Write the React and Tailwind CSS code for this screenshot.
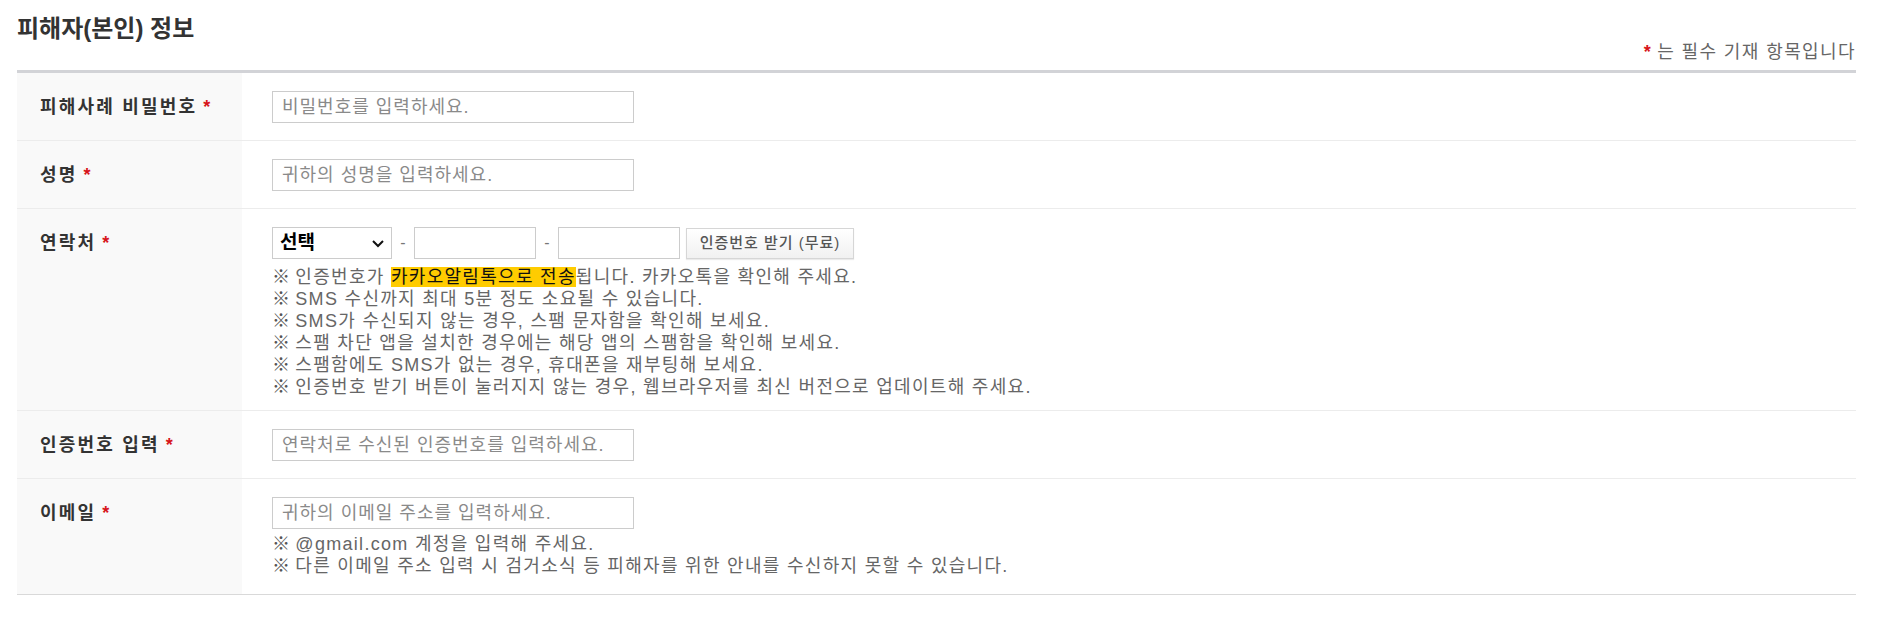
const fieldRows = [
  { label: '피해사례 비밀번호', placeholder: '비밀번호를 입력하세요.' },
  { label: '성명', placeholder: '귀하의 성명을 입력하세요.' },
];

const phoneHints = [
  'SMS 수신까지 최대 5분 정도 소요될 수 있습니다.',
  'SMS가 수신되지 않는 경우, 스팸 문자함을 확인해 보세요.',
  '스팸 차단 앱을 설치한 경우에는 해당 앱의 스팸함을 확인해 보세요.',
  '스팸함에도 SMS가 없는 경우, 휴대폰을 재부팅해 보세요.',
  '인증번호 받기 버튼이 눌러지지 않는 경우, 웹브라우저를 최신 버전으로 업데이트해 주세요.',
];

const emailHints = [
  '@gmail.com 계정을 입력해 주세요.',
  '다른 이메일 주소 입력 시 검거소식 등 피해자를 위한 안내를 수신하지 못할 수 있습니다.',
];

const Star = () => (
  <span className="ml-[6px] font-['Liberation_Sans',sans-serif] font-bold text-[#d7141a]">*</span>
);

const Label = ({ children }) => (
  <div className="w-[225px] shrink-0 bg-[#f9f9f9] pl-[23px] pt-[18px]">
    <div className="text-[18px] leading-[32px] font-bold tracking-[2.2px] text-[#333]">
      {children}
      <Star />
    </div>
  </div>
);

const TextInput = ({ placeholder, className = 'w-[362px]' }) => (
  <input
    type="text"
    placeholder={placeholder}
    className={`${className} h-[32px] border border-[#cccccc] bg-white px-[9px] text-[18px] tracking-[1px] text-[#333] outline-none placeholder:text-[#8a8a8a]`}
  />
);

const Hint = ({ children }) => (
  <li className="flex">
    <span className="mr-[4px] text-[#555]">※</span>
    <span>{children}</span>
  </li>
);

const Row = ({ label, children, last }) => (
  <div className={`flex ${last ? '' : 'border-b border-[#ececec]'}`}>
    <Label>{label}</Label>
    <div className="flex-1 pl-[30px]">{children}</div>
  </div>
);

export default function App() {
  return (
    <div className="min-h-[624px] bg-white font-['Liberation_Sans','Noto_Sans_CJK_KR',sans-serif]">
      <div className="ml-[17px] w-[1839px]">
        <div className="pt-[16px] pb-[8px]">
          <h2 className="text-[24px] leading-[26px] font-bold text-[#333]">피해자(본인) 정보</h2>
          <p className="text-right text-[18px] leading-[20px] tracking-[1.4px] text-[#666]">
            <span className="mr-[5px] font-bold text-[#d7141a]">*</span>는 필수 기재 항목입니다
          </p>
        </div>

        <div className="border-t-[3px] border-b border-t-[#d2d3d7] border-b-[#d9d9d9]">
          {fieldRows.map((row) => (
            <Row key={row.label} label={row.label}>
              <div className="pt-[18px] pb-[17px]">
                <TextInput placeholder={row.placeholder} />
              </div>
            </Row>
          ))}

          <Row label="연락처">
            <div className="pt-[18px] pb-[12px]">
              <div className="flex items-center gap-[6px]">
                <div className="relative">
                  <select className="block h-[32px] w-[120px] appearance-none border border-[#cccccc] bg-white pl-[7px] text-[19px] font-semibold text-black outline-none">
                    <option>선택</option>
                    <option>010</option>
                    <option>011</option>
                    <option>016</option>
                  </select>
                  <svg className="pointer-events-none absolute right-[8px] top-[13px]" width="12" height="8" viewBox="0 0 12 8">
                    <polyline points="1,1 6,6 11,1" fill="none" stroke="#111" strokeWidth="2" />
                  </svg>
                </div>
                <span className="w-[10px] text-center text-[16px] text-[#777]">-</span>
                <TextInput className="w-[122px]" />
                <span className="w-[10px] text-center text-[16px] text-[#777]">-</span>
                <TextInput className="w-[122px]" />
                <button className="h-[31px] w-[168px] border border-[#d6d6d6] bg-gradient-to-b from-white to-[#f1f1f1] text-[15px] font-medium tracking-[1px] text-[#555] shadow-[0_1px_1px_rgba(0,0,0,0.08)]">
                  인증번호 받기 (무료)
                </button>
              </div>
              <ul className="mt-[7px] text-[18px] leading-[22px] tracking-[1.3px] text-[#666]">
                <Hint>
                  인증번호가 <span className="bg-[#ffcc00] text-[#111]">카카오알림톡으로 전송</span>됩니다. 카카오톡을 확인해 주세요.
                </Hint>
                {phoneHints.map((hint) => (
                  <Hint key={hint}>{hint}</Hint>
                ))}
              </ul>
            </div>
          </Row>

          <Row label="인증번호 입력">
            <div className="pt-[18px] pb-[17px]">
              <TextInput placeholder="연락처로 수신된 인증번호를 입력하세요." />
            </div>
          </Row>

          <Row label="이메일" last>
            <div className="pt-[18px] pb-[17px]">
              <TextInput placeholder="귀하의 이메일 주소를 입력하세요." />
              <ul className="mt-[4px] text-[18px] leading-[22px] tracking-[1.3px] text-[#666]">
                {emailHints.map((hint) => (
                  <Hint key={hint}>{hint}</Hint>
                ))}
              </ul>
            </div>
          </Row>
        </div>
      </div>
    </div>
  );
}
